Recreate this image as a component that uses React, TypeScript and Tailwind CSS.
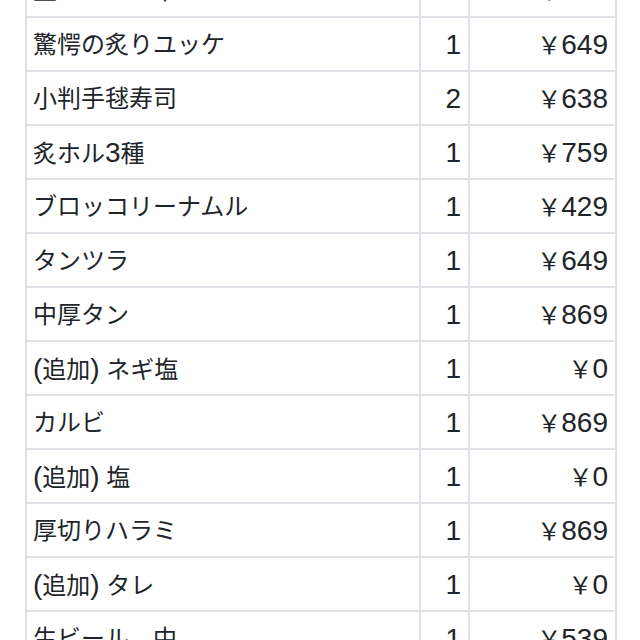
import React from "react";

const rows: [string, string, string][] = [
  ["生ビール　中", "1", "￥539"],
  ["驚愕の炙りユッケ", "1", "￥649"],
  ["小判手毬寿司", "2", "￥638"],
  ["炙ホル3種", "1", "￥759"],
  ["ブロッコリーナムル", "1", "￥429"],
  ["タンツラ", "1", "￥649"],
  ["中厚タン", "1", "￥869"],
  ["(追加) ネギ塩", "1", "￥0"],
  ["カルビ", "1", "￥869"],
  ["(追加) 塩", "1", "￥0"],
  ["厚切りハラミ", "1", "￥869"],
  ["(追加) タレ", "1", "￥0"],
  ["生ビール　中", "1", "￥539"],
];

function Mixed({ text }: { text: string }) {
  const parts = text.split(/([\x21-\x7E]+)/);
  return (
    <span className="leading-none whitespace-pre">
      {parts.map((p, i) =>
        /^[\x21-\x7E]+$/.test(p) ? (
          <span key={i} className="text-[28px]">
            {p}
          </span>
        ) : (
          <span key={i}>{p}</span>
        )
      )}
    </span>
  );
}

export default function App() {
  return (
    <div className="w-[640px] h-[640px] overflow-hidden bg-white">
      <div
        className="ml-[25px] mt-[-36px] w-[592px] border-l-2 border-[#dee2e6] text-[24px] text-[#212529]"
        style={{ fontFamily: '"Liberation Sans", "Noto Sans CJK JP", sans-serif' }}
      >
        {rows.map(([name, qty, price], i) => (
          <div key={i} className="flex h-[54px] border-b-2 border-[#dee2e6]">
            <div className="w-[394px] border-r-2 border-[#dee2e6] flex items-center pl-[6px] pt-[2px]">
              <Mixed text={name} />
            </div>
            <div className="w-[49px] border-r-2 border-[#dee2e6] flex items-center justify-end pr-[7px] pt-[2px]">
              <Mixed text={qty} />
            </div>
            <div className="flex-1 border-r-2 border-[#dee2e6] flex items-center justify-end pr-[7px] pt-[2px]">
              <Mixed text={price} />
            </div>
          </div>
        ))}
      </div>
    </div>
  );
}
